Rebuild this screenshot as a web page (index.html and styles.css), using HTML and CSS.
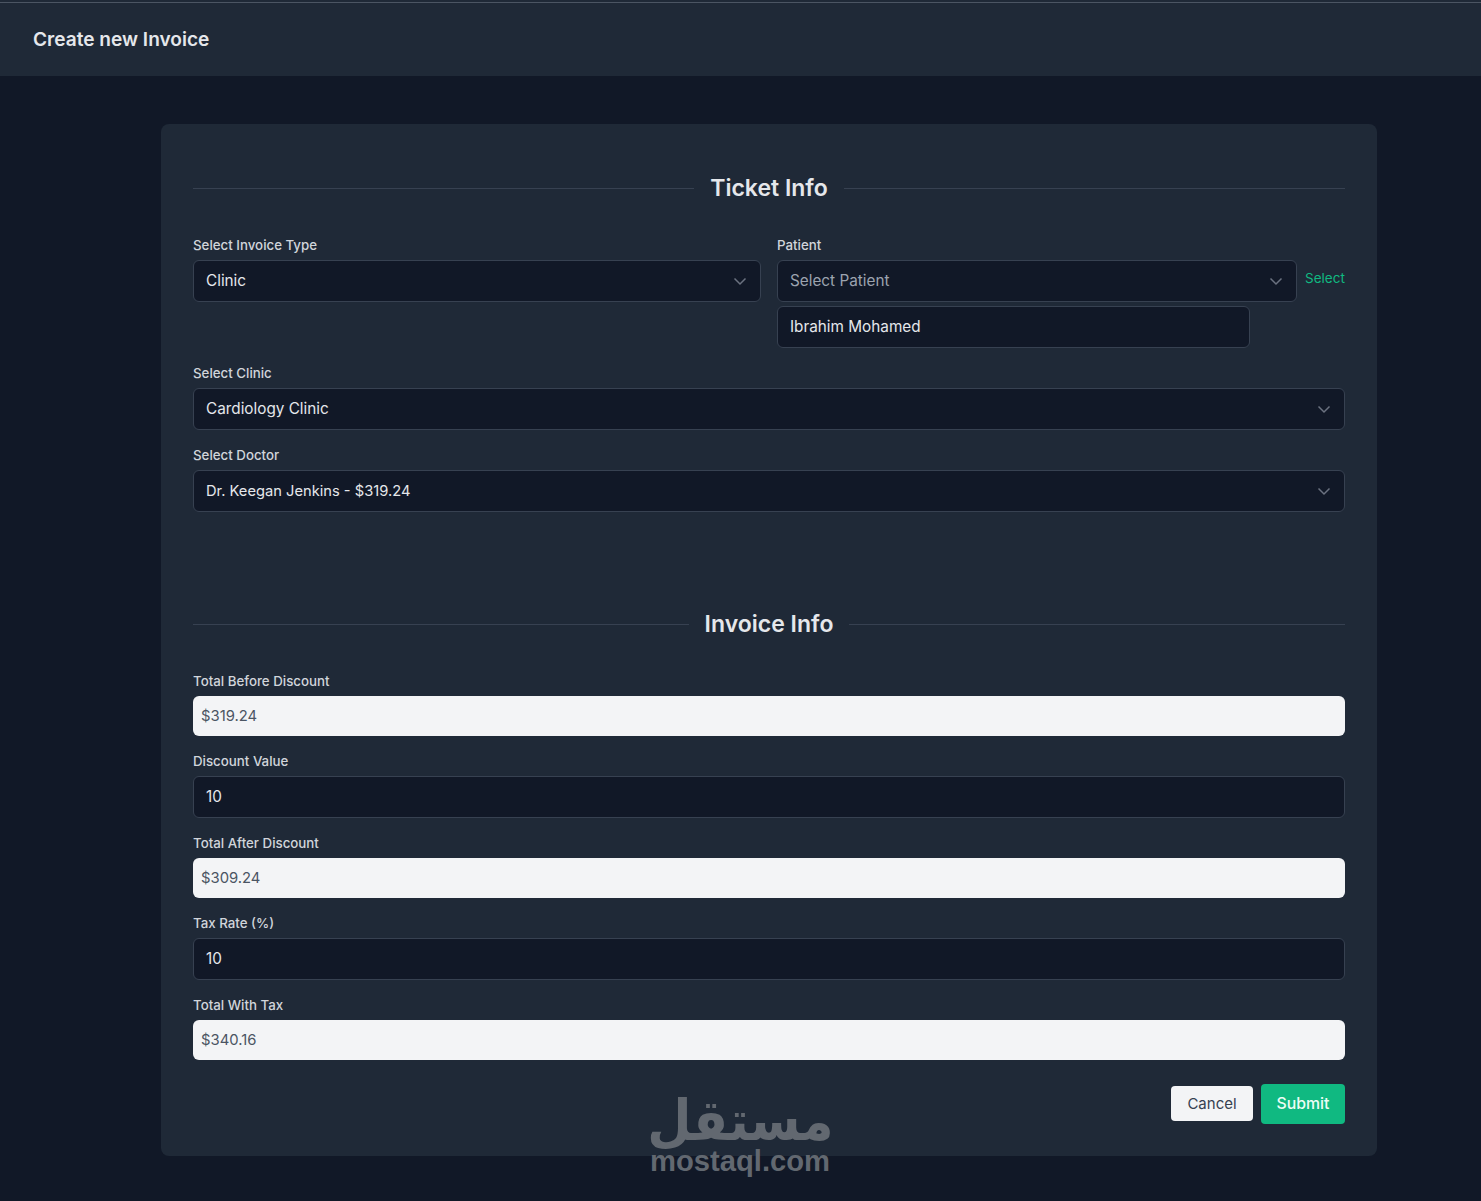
FILE: index.html
```html
<!DOCTYPE html>
<html lang="en">
<head>
<meta charset="utf-8">
<title>Create new Invoice</title>
<link rel="stylesheet" href="styles.css">
</head>
<body>
<header class="topbar"><h1 class="page-title">Create new Invoice</h1></header>
<main class="page">
  <form class="card">
    <div class="section-head first"><span class="section-title">Ticket Info</span></div>
    <div class="two-col">
      <div class="field">
        <div class="label">Select Invoice Type</div>
        <div class="control dark select"><span>Clinic</span><svg class="chev" viewBox="0 0 14 14"><path d="M1.5 4.5 7 10l5.5-5.5"/></svg></div>
      </div>
      <div class="field">
        <div class="label">Patient</div>
        <div class="patient-row">
          <div class="control dark select grow"><span class="placeholder">Select Patient</span><svg class="chev" viewBox="0 0 14 14"><path d="M1.5 4.5 7 10l5.5-5.5"/></svg></div>
          <a class="select-link">Select</a>
        </div>
        <div class="control dark chosen">Ibrahim Mohamed</div>
      </div>
    </div>
    <div class="stack">
      <div class="field">
        <div class="label">Select Clinic</div>
        <div class="control dark select"><span>Cardiology Clinic</span><svg class="chev" viewBox="0 0 14 14"><path d="M1.5 4.5 7 10l5.5-5.5"/></svg></div>
      </div>
      <div class="field">
        <div class="label">Select Doctor</div>
        <div class="control dark select"><span class="narrow">Dr. Keegan Jenkins - $319.24</span><svg class="chev" viewBox="0 0 14 14"><path d="M1.5 4.5 7 10l5.5-5.5"/></svg></div>
      </div>
    </div>
    <div class="section-head"><span class="section-title">Invoice Info</span></div>
    <div class="stack">
      <div class="field"><div class="label">Total Before Discount</div><div class="control light">$319.24</div></div>
      <div class="field"><div class="label">Discount Value</div><div class="control dark">10</div></div>
      <div class="field"><div class="label">Total After Discount</div><div class="control light">$309.24</div></div>
      <div class="field"><div class="label">Tax Rate (%)</div><div class="control dark">10</div></div>
      <div class="field"><div class="label">Total With Tax</div><div class="control light">$340.16</div></div>
    </div>
    <div class="actions">
      <button type="button" class="btn cancel">Cancel</button>
      <button type="button" class="btn submit">Submit</button>
    </div>
  </form>
  <div class="watermark" aria-hidden="true">
    <span class="wm-ar" lang="ar" dir="rtl">مستقل</span>
    <span class="wm-en">mostaql.com</span>
  </div>
</main>
</body>
</html>
```
FILE: styles.css
```css
* { box-sizing: border-box; }
html, body { margin: 0; padding: 0; }
body {
  background: #111827;
  color: #e5e7eb;
  font-family: Inter, "Noto Sans", sans-serif;
  min-height: 1201px;
}
.topbar {
  height: 76px;
  padding: 24px 33px 0;
  background: linear-gradient(#1f2937 0 2px, #4b5563 2px 3px, #1f2937 3px);
}
.page-title {
  margin: 0;
  font-size: 19.1px;
  line-height: 30px;
  font-weight: 600;
  color: #e5e7eb;
}
.page {
  position: relative;
  padding: 48px 104px 45px 161px;
}
.card {
  width: 1216px;
  padding: 32px;
  background: #1f2937;
  border-radius: 8px;
}
.section-head {
  display: flex;
  align-items: center;
  gap: 16px;
  height: 32px;
  margin: 96px 0 31px;
}
.section-head.first { margin-top: 16px; }
.section-head::before, .section-head::after {
  content: "";
  flex: 1;
  height: 1px;
  background: #374151;
}
.section-title {
  font-size: 23px;
  line-height: 32px;
  font-weight: 600;
  color: #e5e7eb;
}
.two-col {
  display: grid;
  grid-template-columns: 568px 568px;
  gap: 16px;
  margin-bottom: 15px;
}
.stack {
  display: flex;
  flex-direction: column;
  gap: 15px;
}
.label {
  height: 20px;
  margin-bottom: 5px;
  font-size: 13.3px;
  line-height: 20px;
  font-weight: 500;
  color: #d1d5db;
}
.control {
  display: flex;
  align-items: center;
  border-radius: 6px;
  font-size: 15.3px;
}
.dark {
  height: 42px;
  padding: 0 12px 2px;
  background: #111827;
  border: 1px solid #374151;
  color: #e5e7eb;
}
.light {
  height: 40px;
  padding: 0 8px;
  background: #f3f4f6;
  color: #4b5563;
  font-size: 14.8px;
}
.select { justify-content: space-between; }
.narrow {
  display: block;
  padding-top: 2px;
  font-size: 14.7px;
}
.placeholder { color: #9ca3af; }
.chev {
  width: 14px;
  height: 14px;
  margin: 2px 1px 0 0;
  fill: none;
  stroke: #6b7280;
  stroke-width: 1.5;
}
.patient-row {
  display: flex;
  gap: 8px;
}
.grow { flex: 1; }
.select-link {
  width: 40px;
  padding-top: 8px;
  font-size: 13.5px;
  line-height: 20px;
  color: #10b981;
}
.chosen {
  width: 473px;
  margin-top: 4px;
}
.actions {
  display: flex;
  justify-content: flex-end;
  align-items: flex-start;
  gap: 8px;
  margin-top: 24px;
}
.btn {
  border: 0;
  border-radius: 4px;
  font-family: inherit;
  padding: 0 0 1px;
}
.cancel {
  width: 82px;
  height: 35px;
  margin-top: 2px;
  background: #f3f4f6;
  color: #374151;
  font-size: 15px;
}
.submit {
  width: 84px;
  height: 40px;
  background: #10b981;
  color: #ecfdf5;
  font-size: 15.8px;
  font-weight: 500;
}
.watermark {
  position: absolute;
  left: 630px;
  top: 1019px;
  width: 220px;
  display: flex;
  flex-direction: column;
  align-items: center;
  color: #626870;
  pointer-events: none;
}
.wm-ar {
  font-family: "DejaVu Sans", sans-serif;
  font-size: 56px;
  line-height: 52px;
  height: 52px;
  font-weight: 700;
  transform: scaleX(0.91);
}
.wm-en {
  font-family: "Liberation Sans", sans-serif;
  font-size: 29.2px;
  line-height: 28px;
  font-weight: 700;
}
```
